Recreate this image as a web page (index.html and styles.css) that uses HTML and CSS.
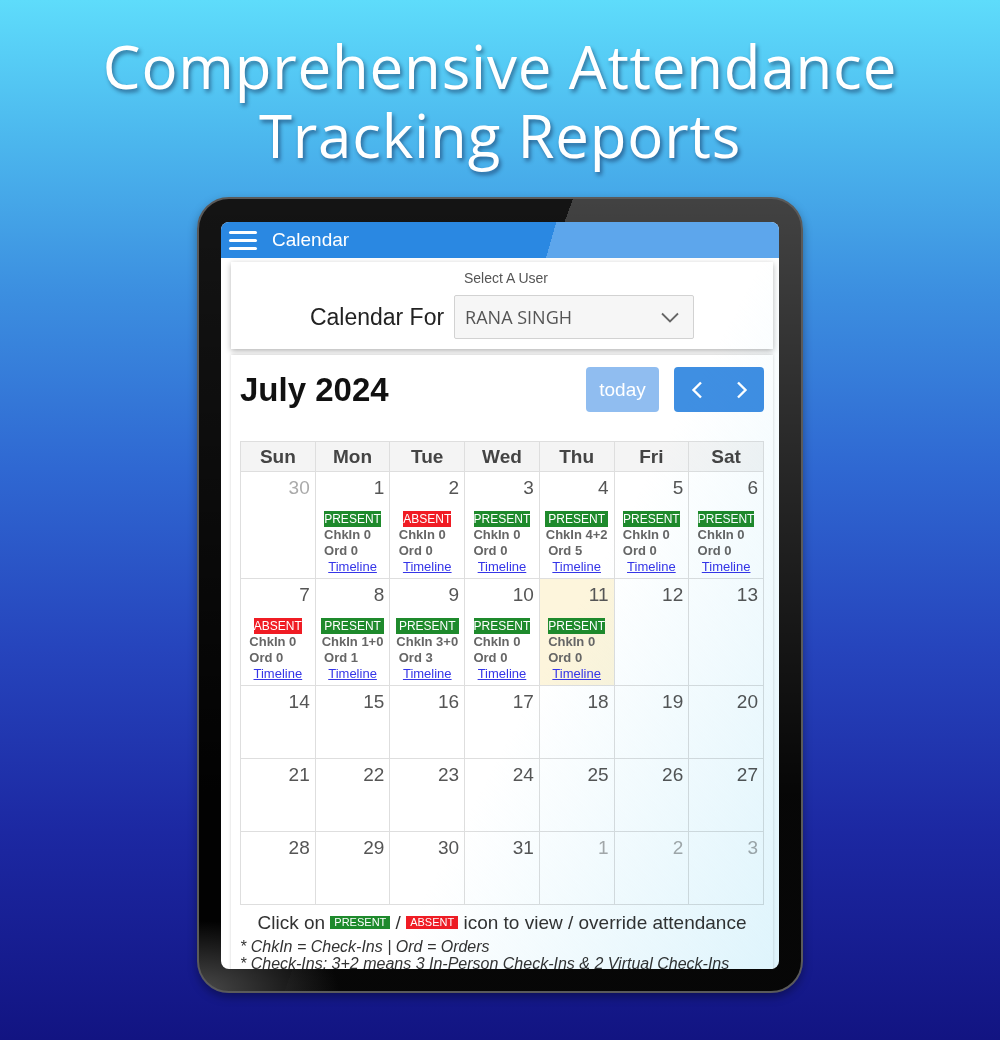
FILE: index.html
```html
<!DOCTYPE html>
<html lang="en">
<head>
    <meta charset="UTF-8">
    <meta name="viewport" content="width=device-width, initial-scale=1.0">
    <title>Attendance Calendar</title>
    <link rel="stylesheet" href="styles.css">
</head>
<body>
    <div class="stage">
        <h1 class="headline">Comprehensive Attendance<br>Tracking Reports</h1>

        <div class="tablet">
            <div class="screen">
                <div class="appbar">
                    <span class="burger"><i></i><i></i><i></i></span>
                    <span class="appbar-title">Calendar</span>
                </div>

                <div class="content">
                    <!-- user picker -->
                    <div class="user-card">
                        <div class="user-label">Select A User</div>
                        <div class="user-row">
                            <span class="user-for">Calendar For</span>
                            <div class="user-select">
                                <span>RANA SINGH</span>
                                <svg width="18" height="11" viewBox="0 0 18 11"><path d="M1 1.5 L9 9.5 L17 1.5" fill="none" stroke="#666" stroke-width="1.8"/></svg>
                            </div>
                        </div>
                    </div>

                    <!-- calendar -->
                    <div class="cal-card">
                        <div class="cal-toolbar">
                            <h2 class="cal-month">July 2024</h2>
                            <div class="cal-buttons">
                                <button class="btn-today">today</button>
                                <div class="btn-group">
                                    <button class="btn-nav"><svg width="12" height="18" viewBox="0 0 12 18"><path d="M10 1.5 L2.5 9 L10 16.5" fill="none" stroke="#fff" stroke-width="2.4"/></svg></button>
                                    <button class="btn-nav"><svg width="12" height="18" viewBox="0 0 12 18"><path d="M2 1.5 L9.5 9 L2 16.5" fill="none" stroke="#fff" stroke-width="2.4"/></svg></button>
                                </div>
                            </div>
                        </div>

                        <table class="cal">
                            <thead>
                                <tr><th>Sun</th><th>Mon</th><th>Tue</th><th>Wed</th><th>Thu</th><th>Fri</th><th>Sat</th></tr>
                            </thead>
                            <tbody>
                                <tr class="week-full">
                                    <td class="other"><div class="num">30</div></td>
                                    <td><div class="num">1</div><div class="day"><span class="tag present">PRESENT</span><b>ChkIn 0</b><b>Ord 0</b><a href="#">Timeline</a></div></td>
                                    <td><div class="num">2</div><div class="day"><span class="tag absent">ABSENT</span><b>ChkIn 0</b><b>Ord 0</b><a href="#">Timeline</a></div></td>
                                    <td><div class="num">3</div><div class="day"><span class="tag present">PRESENT</span><b>ChkIn 0</b><b>Ord 0</b><a href="#">Timeline</a></div></td>
                                    <td><div class="num">4</div><div class="day"><span class="tag present wide">PRESENT</span><b>ChkIn 4+2</b><b>Ord 5</b><a href="#">Timeline</a></div></td>
                                    <td><div class="num">5</div><div class="day"><span class="tag present">PRESENT</span><b>ChkIn 0</b><b>Ord 0</b><a href="#">Timeline</a></div></td>
                                    <td><div class="num">6</div><div class="day"><span class="tag present">PRESENT</span><b>ChkIn 0</b><b>Ord 0</b><a href="#">Timeline</a></div></td>
                                </tr>
                                <tr class="week-full">
                                    <td><div class="num">7</div><div class="day"><span class="tag absent">ABSENT</span><b>ChkIn 0</b><b>Ord 0</b><a href="#">Timeline</a></div></td>
                                    <td><div class="num">8</div><div class="day"><span class="tag present wide">PRESENT</span><b>ChkIn 1+0</b><b>Ord 1</b><a href="#">Timeline</a></div></td>
                                    <td><div class="num">9</div><div class="day"><span class="tag present wide">PRESENT</span><b>ChkIn 3+0</b><b>Ord 3</b><a href="#">Timeline</a></div></td>
                                    <td><div class="num">10</div><div class="day"><span class="tag present">PRESENT</span><b>ChkIn 0</b><b>Ord 0</b><a href="#">Timeline</a></div></td>
                                    <td class="today"><div class="num">11</div><div class="day"><span class="tag present">PRESENT</span><b>ChkIn 0</b><b>Ord 0</b><a href="#">Timeline</a></div></td>
                                    <td><div class="num">12</div></td>
                                    <td><div class="num">13</div></td>
                                </tr>
                                <tr class="week">
                                    <td><div class="num">14</div></td><td><div class="num">15</div></td><td><div class="num">16</div></td><td><div class="num">17</div></td><td><div class="num">18</div></td><td><div class="num">19</div></td><td><div class="num">20</div></td>
                                </tr>
                                <tr class="week">
                                    <td><div class="num">21</div></td><td><div class="num">22</div></td><td><div class="num">23</div></td><td><div class="num">24</div></td><td><div class="num">25</div></td><td><div class="num">26</div></td><td><div class="num">27</div></td>
                                </tr>
                                <tr class="week">
                                    <td><div class="num">28</div></td><td><div class="num">29</div></td><td><div class="num">30</div></td><td><div class="num">31</div></td><td class="other"><div class="num">1</div></td><td class="other"><div class="num">2</div></td><td class="other"><div class="num">3</div></td>
                                </tr>
                            </tbody>
                        </table>

                        <p class="legend">Click on <span class="tag small present">PRESENT</span> / <span class="tag small absent">ABSENT</span> icon to view / override attendance</p>
                        <p class="note">* ChkIn = Check-Ins | Ord = Orders</p>
                        <p class="note">* Check-Ins: 3+2 means 3 In-Person Check-Ins &amp; 2 Virtual Check-Ins</p>
                    </div>
                </div>

                <div class="glare"></div>
            </div>
        </div>
    </div>
</body>
</html>
```

FILE: styles.css
```css
*{
    box-sizing: border-box;
}
html, body{
    margin: 0;
    padding: 0;
}
body{
    width: 1000px;
    height: 1040px;
    overflow: hidden;
    font-family: "Liberation Sans", Arial, sans-serif;
    background: linear-gradient(180deg, #5edcfb 0%, #4cb8ee 13%, #3c8fe0 28%, #2f68d2 45%, #2645bd 62%, #1c28a2 80%, #121482 100%);
}
.stage{
    padding-top: 32px;
    display: flex;
    flex-direction: column;
    align-items: center;
}
.headline{
    margin: 0;
    font-family: "Open Sans", sans-serif;
    font-weight: 400;
    font-size: 60px;
    line-height: 69px;
    letter-spacing: 0.8px;
    color: #fff;
    text-align: center;
    text-shadow: 2px 3px 4px rgba(0, 0, 40, .45);
}

/* tablet frame */
.tablet{
    margin-top: 27px;
    width: 606px;
    height: 796px;
    padding: 23px 22px 22px;
    border: 2px solid #5a5a5a;
    border-radius: 32px;
    background:
        radial-gradient(ellipse 140px 70px at 0% 100%, #4a4a4a 0, rgba(74,74,74,0) 100%),
        linear-gradient(180deg, rgba(0,0,0,0) 0, rgba(0,0,0,.9) 75%),
        linear-gradient(110deg, #141414 0 42%, #424242 42% 100%);
    box-shadow: 0 4px 10px rgba(0,0,0,.35);
}
.screen{
    position: relative;
    width: 558px;
    height: 747px;
    border-radius: 8px;
    overflow: hidden;
    background: #fff;
}
.appbar{
    height: 36px;
    display: flex;
    align-items: center;
    padding-left: 8px;
    background: linear-gradient(106deg, #2a88e2 0 59%, #5da6ec 59% 100%);
    color: #fff;
}
.burger{
    width: 28px;
    display: flex;
    flex-direction: column;
    gap: 5px;
}
.burger i{
    display: block;
    height: 3px;
    border-radius: 2px;
    background: #fff;
}
.appbar-title{
    margin-left: 15px;
    font-size: 19px;
}

.content{
    padding: 4px 6px 0 10px;
}

/* user card */
.user-card{
    height: 87px;
    padding-top: 8px;
    background: #fff;
    box-shadow: 0 2px 6px rgba(0,0,0,.3);
}
.user-label{
    font-size: 14px;
    line-height: 16px;
    color: #555;
    text-align: center;
    padding-left: 8px;
}
.user-row{
    margin-top: 9px;
    display: flex;
    justify-content: center;
    align-items: center;
    gap: 10px;
}
.user-for{
    font-size: 23px;
    color: #222;
}
.user-select{
    width: 240px;
    height: 44px;
    padding: 0 14px 0 10px;
    display: flex;
    align-items: center;
    justify-content: space-between;
    background: #f6f6f6;
    border: 1px solid #d2d2d2;
    border-radius: 2px;
    font-family: "Open Sans", sans-serif;
    font-size: 18px;
    color: #555;
}

/* calendar card */
.cal-card{
    margin-top: 6px;
    padding: 12px 9px 0;
    background: #fff;
    box-shadow: 0 0 3px rgba(0,0,0,.18);
}
.cal-toolbar{
    height: 45px;
    display: flex;
    justify-content: space-between;
    align-items: center;
}
.cal-month{
    margin: 0;
    font-size: 33px;
    font-weight: bold;
    color: #111;
}
.cal-buttons{
    display: flex;
    gap: 15px;
}
.cal-buttons button{
    height: 45px;
    border: 0;
    padding: 0;
    color: #fff;
    font-family: "Liberation Sans", Arial, sans-serif;
}
.btn-today{
    width: 73px;
    border-radius: 4px;
    background: #90bdf0;
    font-size: 19px;
}
.btn-group{
    display: flex;
    border-radius: 4px;
    overflow: hidden;
    background: #3f8fe2;
}
.btn-nav{
    width: 45px;
    display: flex;
    align-items: center;
    justify-content: center;
    background: transparent;
}

/* month grid */
.cal{
    margin-top: 29px;
    width: 524px;
    border-collapse: collapse;
    table-layout: fixed;
}
.cal th, .cal td{
    border: 1px solid #dedede;
}
.cal th{
    height: 30px;
    padding: 0;
    background: #f4f4f4;
    font-size: 19px;
    font-weight: bold;
    color: #444;
}
.cal td{
    padding: 4px 5px 0;
    vertical-align: top;
}
.cal .week-full td{
    height: 107px;
}
.cal .week td{
    height: 73px;
}
.cal td.today{
    background: #fdf5dc;
}
.num{
    height: 24px;
    text-align: right;
    font-size: 19px;
    line-height: 24px;
    color: #555;
}
.other .num{
    color: #aaa;
}
.day{
    margin-top: 11px;
    display: flex;
    flex-direction: column;
    align-items: center;
}
.day b, .day a{
    font-size: 13px;
    line-height: 16px;
}
.day b{
    width: fit-content;
    min-width: 57px;
    margin: 0 auto;
    color: #666;
}
.day a{
    color: #3535e8;
    text-decoration: underline;
}
.tag{
    display: inline-block;
    height: 16px;
    line-height: 16px;
    font-size: 12px;
    color: #fff;
}
.tag.wide{
    padding: 0 3px;
}
.present{
    background: #1e8a2c;
}
.absent{
    background: #f01c24;
}

/* legend and notes */
.legend{
    margin: 7px 0 0;
    font-size: 19px;
    line-height: 22px;
    color: #333;
    text-align: center;
}
.tag.small{
    height: 13px;
    line-height: 13px;
    font-size: 11px;
    padding: 0 4px;
    vertical-align: 3px;
}
.note{
    margin: 0;
    font-size: 16px;
    line-height: 17px;
    font-style: italic;
    color: #333;
}
.legend + .note{
    margin-top: 4px;
}

.glare{
    position: absolute;
    inset: 36px 0 0 0;
    pointer-events: none;
    mix-blend-mode: multiply;
    background: linear-gradient(118deg, rgba(255,255,255,0) 58%, rgba(222,244,252,1) 100%);
}
```
